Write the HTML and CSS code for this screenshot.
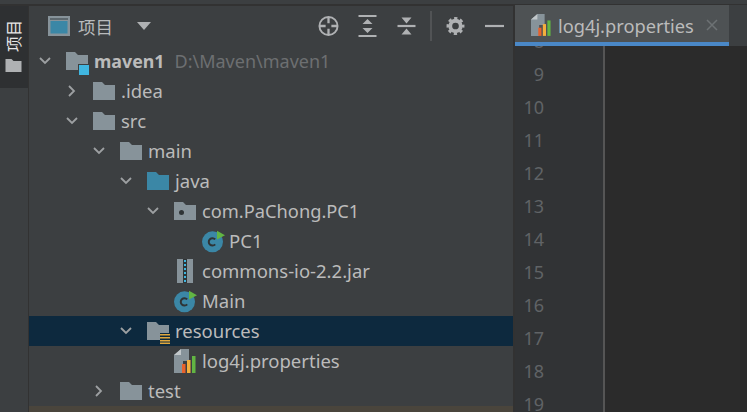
FILE: index.html
```html
<!DOCTYPE html>
<html lang="zh">
<head>
<meta charset="utf-8">
<title>项目</title>
<link rel="stylesheet" href="styles.css">
</head>
<body>
<svg class="defs" width="0" height="0" aria-hidden="true">
  <defs>
    <symbol id="folder" viewBox="0 0 22 18"><path d="M0 0h9l3 3h10v15H0z" fill="#87939a"/></symbol>
    <symbol id="chev-d" viewBox="0 0 14 14"><path d="M2 4l5 5 5-5" fill="none" stroke="#9da0a2" stroke-width="1.8"/></symbol>
    <symbol id="chev-r" viewBox="0 0 14 14"><path d="M4 2l5 5-5 5" fill="none" stroke="#9da0a2" stroke-width="1.8"/></symbol>
    <symbol id="cls" viewBox="0 0 24 24">
      <circle cx="10.500" cy="12.800" r="10.500" fill="#3b87a6"/>
      <path d="M13.200 10.400a3.700 3.700 0 1 0 0 5" fill="none" stroke="#2f3436" stroke-width="2"/>
      <path d="M15 1.800l8 4.400-8 4.400z" fill="#62b543"/>
    </symbol>
    <symbol id="props" viewBox="0 0 22 24">
      <path d="M0 6l7-6h8v12H9v12H0z" fill="#87939a"/>
      <path d="M7 0v6H0z" fill="#c1c7ca"/>
      <rect x="8" y="15" width="3.500" height="9" fill="#e8622c"/>
      <rect x="13" y="11" width="3.500" height="13" fill="#f4af3d"/>
      <rect x="18" y="7" width="3.500" height="17" fill="#62b543"/>
    </symbol>
  </defs>
</svg>
<div class="app">
  <aside class="rail">
    <div class="rail-tab">
      <span class="rail-label">项目</span>
      <svg class="rail-icon" viewBox="0 0 16 13"><path d="M0 0h6l2 2h8v11H0z" fill="#afb1b3"/></svg>
    </div>
  </aside>
  <section class="panel">
    <header class="toolbar">
      <svg class="view-icon" viewBox="0 0 22 20"><rect width="22" height="20" fill="#87939a"/><rect x="2" y="2" width="18" height="2" fill="#5d686e"/><rect x="2.500" y="5" width="17" height="12.500" fill="#3b87a6"/></svg>
      <span class="view-name">项目</span>
      <svg class="caret" viewBox="0 0 14 8"><path d="M0 0h14L7 8z" fill="#afb1b3"/></svg>
      <span class="spacer"></span>
      <div class="tools">
        <svg class="tool" viewBox="0 0 22 22"><circle cx="11" cy="11" r="9.500" fill="none" stroke="#afb1b3" stroke-width="2"/><path d="M11 2v6M11 14v6M2 11h6M14 11h6" stroke="#afb1b3" stroke-width="2.400"/></svg>
        <svg class="tool" viewBox="0 0 21 22"><path d="M1.500 1h18M1.500 21h18" stroke="#afb1b3" stroke-width="2.200"/><path d="M10.500 4l5 5h-10zM10.500 18l-5-5h10z" fill="#afb1b3"/></svg>
        <svg class="tool" viewBox="0 0 21 22"><path d="M1.500 11h18" stroke="#afb1b3" stroke-width="2.200"/><path d="M10.500 8.500l-5-6h10zM10.500 13.500l5 6h-10z" fill="#afb1b3"/></svg>
        <span class="tool-sep"></span>
        <svg class="tool" viewBox="0 0 22 22"><circle cx="11" cy="11" r="5.500" fill="none" stroke="#afb1b3" stroke-width="4"/><circle cx="11" cy="11" r="8" fill="none" stroke="#afb1b3" stroke-width="2.800" stroke-dasharray="3.400 2.883" stroke-dashoffset="1.700"/></svg>
        <svg class="tool" viewBox="0 0 21 22"><path d="M1 11h19" stroke="#afb1b3" stroke-width="2.200"/></svg>
      </div>
    </header>
    <ul class="tree">
      <li class="row d0">
        <svg class="chev"><use href="#chev-d"/></svg>
        <span class="module-icon"><svg class="folder"><use href="#folder"/></svg><i class="module-badge"></i></span>
        <span class="name bold">maven1</span><span class="path">D:\Maven\maven1</span>
      </li>
      <li class="row d1"><svg class="chev"><use href="#chev-r"/></svg><svg class="folder"><use href="#folder"/></svg><span class="name">.idea</span></li>
      <li class="row d1"><svg class="chev"><use href="#chev-d"/></svg><svg class="folder"><use href="#folder"/></svg><span class="name">src</span></li>
      <li class="row d2"><svg class="chev"><use href="#chev-d"/></svg><svg class="folder"><use href="#folder"/></svg><span class="name">main</span></li>
      <li class="row d3"><svg class="chev"><use href="#chev-d"/></svg><svg class="folder" viewBox="0 0 22 18"><path d="M0 0h9l3 3h10v15H0z" fill="#3b87a6"/></svg><span class="name">java</span></li>
      <li class="row d4"><svg class="chev"><use href="#chev-d"/></svg><svg class="folder" viewBox="0 0 22 18"><path d="M0 0h9l3 3h10v15H0z" fill="#87939a"/><circle cx="7.500" cy="10.500" r="2.500" fill="#2f3436"/></svg><span class="name pkg">com.PaChong.PC1</span></li>
      <li class="row d5"><svg class="file-cls"><use href="#cls"/></svg><span class="name">PC1</span></li>
      <li class="row d4"><span class="chev"></span><svg class="file" viewBox="0 0 16 24"><path d="M0 0h16v24H0z" fill="#87939a"/><path d="M6 0h4v24H6z" fill="#2f3436"/><path d="M7 1h2v2H7zM7 5h2v2H7zM7 9h2v2H7zM7 13h2v2H7zM7 17h2v2H7zM7 21h2v2H7z" fill="#40b6e0"/></svg><span class="name">commons-io-2.2.jar</span></li>
      <li class="row d4"><span class="chev"></span><svg class="file-cls"><use href="#cls"/></svg><span class="name">Main</span></li>
      <li class="row d3 selected"><svg class="chev"><use href="#chev-d"/></svg>
        <span class="module-icon"><svg class="folder"><use href="#folder"/></svg><svg class="res-badge" viewBox="0 0 10 11"><path d="M0 1h10v1.500H0zM0 4h10v1.500H0zM0 7h10v1.500H0zM0 9.500h10V11H0z" fill="#e0a73c"/></svg></span>
        <span class="name">resources</span></li>
      <li class="row d4"><span class="chev"></span><svg class="file"><use href="#props"/></svg><span class="name">log4j.properties</span></li>
      <li class="row d2"><svg class="chev"><use href="#chev-r"/></svg><svg class="folder"><use href="#folder"/></svg><span class="name">test</span></li>
    </ul>
    <div class="bottom-strip"></div>
  </section>
  <main class="editor">
    <div class="tabs">
      <div class="tab">
        <svg class="tab-icon"><use href="#props"/></svg>
        <span class="tab-name">log4j.properties</span>
        <svg class="tab-close" viewBox="0 0 12 12"><path d="M1 1l10 10M11 1L1 11" stroke="#6d7274" stroke-width="1.500"/></svg>
      </div>
    </div>
    <div class="code">
      <ol class="gutter">
        <li>8</li><li>9</li><li>10</li><li>11</li><li>12</li><li>13</li><li>14</li><li>15</li><li>16</li><li>17</li><li>18</li><li>19</li>
      </ol>
      <div class="text"></div>
    </div>
  </main>
</div>
</body>
</html>
```
FILE: styles.css
```css
* { box-sizing: border-box; }
html, body { margin: 0; padding: 0; height: 100%; overflow: hidden; background: #3c3f41; }
body { font-family: "Noto Sans", "Noto Sans CJK SC", sans-serif; color: #afb1b3; }
.defs { position: absolute; }
ul, ol { list-style: none; margin: 0; padding: 0; }

.app { display: flex; width: 747px; height: 412px; border-top: 4px solid #3c3f41; }

.rail { width: 29px; flex: none; border-right: 1px solid #323232; border-top: 2px solid #323232; }
.rail-tab { height: 82px; background: #2e3032; display: flex; flex-direction: column; align-items: center; padding-top: 14px; gap: 7px; }
.rail-label { writing-mode: vertical-rl; text-orientation: sideways; transform: rotate(180deg); font-size: 16px; line-height: 16px; color: #e6e6e6; }
.rail-icon { width: 17px; height: 13px; margin-right: 2px; }

.panel { width: 484px; flex: none; display: flex; flex-direction: column; border-top: 2px solid #323232; }
.toolbar { height: 40px; flex: none; display: flex; align-items: center; padding-left: 19px; }
.view-icon { width: 22px; height: 20px; }
.view-name { font-size: 17.500px; margin-left: 8px; color: #b8babc; }
.caret { width: 14px; height: 8px; margin-left: 24px; }
.spacer { flex: 1; }
.tools { display: flex; align-items: center; gap: 18px; padding-right: 8px; }
.tool { width: 21px; height: 22px; }
.tool-sep { width: 2px; height: 30px; background: #515355; margin: 0 -5px 0 -4.500px; }

.tree { flex: 1; min-height: 0; }
.row { height: 30px; display: flex; align-items: center; font-size: 18.500px; white-space: nowrap; }
.d0 { padding-left: 9px; }
.d1 { padding-left: 36px; }
.d2 { padding-left: 63px; }
.d3 { padding-left: 90px; }
.d4 { padding-left: 117px; }
.d5 { padding-left: 173px; }
.selected { background: #0d293e; }
.chev { width: 14px; height: 14px; flex: none; margin-right: 14px; }
.folder { width: 22px; height: 18px; flex: none; display: block; }
.file { width: 22px; height: 24px; flex: none; }
.file-cls { width: 24px; height: 24px; flex: none; margin-right: -2px; }
.d5 .file-cls { margin-right: -3px; }
.name { margin-left: 6px; color: #bbbbbb; line-height: 24px; }
.pkg { font-size: 18.250px; }
.bold { font-weight: 700; font-size: 17.800px; margin-left: 6px; }
.path { margin-left: 10px; font-size: 18px; line-height: 24px; color: #6d6f71; }
.module-icon { position: relative; display: block; width: 22px; height: 18px; flex: none; }
.module-badge { position: absolute; right: -1px; bottom: -5px; width: 10px; height: 10px; background: #40b6e0; outline: 1px solid #3c3f41; }
.res-badge { position: absolute; right: -1px; bottom: -4px; width: 10px; height: 11px; background: #0d293e; }
.bottom-strip { height: 6px; flex: none; background: #4a453c; }

.editor { flex: 1; min-width: 0; display: flex; flex-direction: column; border-left: 2px solid #323232; }
.tabs { height: 42px; flex: none; background: #3c3f41; border-top: 1px solid #323232; }
.tab { width: 214px; height: 41px; background: #4e5254; border-bottom: 4px solid #4a88c7; display: flex; align-items: center; padding: 3px 0 0 16px; }
.tab-icon { width: 20px; height: 22px; flex: none; }
.tab-name { font-size: 18.250px; margin-left: 7px; color: #bbbbbb; }
.tab-close { width: 12px; height: 12px; margin-left: 12px; flex: none; }
.code { flex: 1; min-height: 0; display: flex; overflow: hidden; background: #2b2b2b; }
.gutter { width: 90px; flex: none; background: #313335; border-right: 2px solid #555555; overflow: hidden; padding: 0 59px 0 0; }
.gutter li { height: 33px; line-height: 33px; text-align: right; font-size: 18px; color: #606366; }
.gutter li:first-child { margin-top: -21px; }
.text { flex: 1; }
```
